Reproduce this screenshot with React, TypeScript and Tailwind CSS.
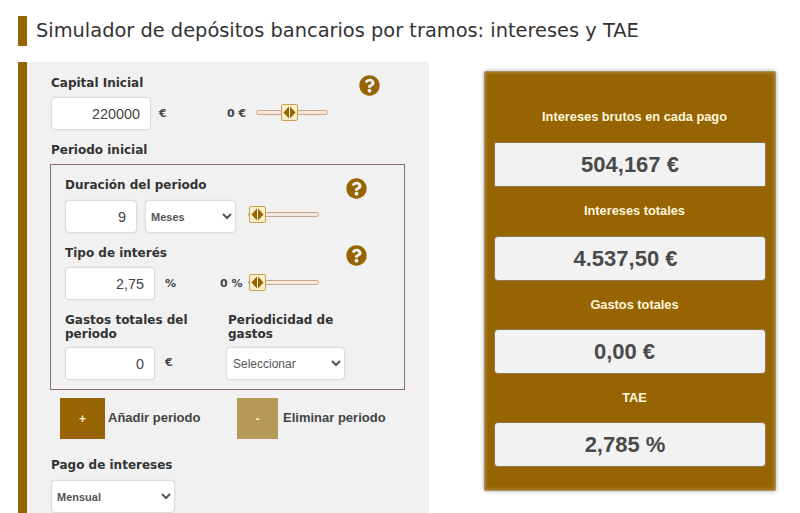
import React from 'react';
import { FaQuestionCircle } from 'react-icons/fa';

const inputCls =
  'h-[33px] rounded-[4px] border border-[#dcdcdc] bg-white pr-[10px] text-right text-[14.4px] text-[#444] [font-family:"Liberation_Sans",sans-serif] shadow-[0_0_2px_rgba(0,0,0,0.08)]';
const selectCls =
  'h-[33px] rounded-[4px] border border-[#dcdcdc] bg-white pl-[1px] text-[11px] font-bold text-[#555] [font-family:"Liberation_Sans",sans-serif] shadow-[0_0_2px_rgba(0,0,0,0.08)]';
const labelCls = 'text-[12px] leading-[14px] font-bold text-[#333] [font-family:"DejaVu_Sans",sans-serif]';
const unitCls = 'pt-[2px] text-[11px] font-bold text-[#444] [font-family:"DejaVu_Sans",sans-serif]';

const Slider = ({ width, thumbLeft, lift }: { width: string; thumbLeft: string; lift: string }) => (
  <div className={`relative h-[5px] rounded-full border border-[#c9a58a] bg-[#f5e9df] ${width} ${lift}`}>
    <div className={`absolute top-[-7px] ${thumbLeft} flex h-[17px] w-[17px] items-center justify-center rounded-[2px] border border-[#c9a24e] bg-[#fbeecb]`}>
      <svg width="13" height="13" viewBox="0 0 13 13">
        <path d="M6 0.5 L6 12.5 L0.5 6.5 Z" fill="#966400" />
        <path d="M7 0.5 L7 12.5 L12.5 6.5 Z" fill="#966400" />
      </svg>
    </div>
  </div>
);

const Help = () => <FaQuestionCircle className="text-[21px] text-[#966400]" />;

const results = [
  { label: 'Intereses brutos en cada pago', value: '504,167 €', gap: 'mt-[38px]', boxGap: 'mt-[18px]', box: 'rounded-[2px]' },
  { label: 'Intereses totales', value: '4.537,50 €', gap: 'mt-[17px]', boxGap: 'mt-[18px]', box: 'rounded-[4px] pr-[9px]' },
  { label: 'Gastos totales', value: '0,00 €', gap: 'mt-[17px]', boxGap: 'mt-[17px]', box: 'rounded-[4px] pr-[11px]' },
  { label: 'TAE', value: '2,785 %', gap: 'mt-[17px]', boxGap: 'mt-[17px]', box: 'rounded-[4px] pr-[10px]' },
];

export default function App() {
  return (
    <div className="h-[513px] w-[800px] overflow-hidden bg-white">
      <div className="pt-[16px] pl-[18px]">
        <h1 className="flex h-[30px] items-center border-l-[9px] border-[#966400] pl-[9px] text-[19.4px] font-normal text-[#333] [font-family:'DejaVu_Sans',sans-serif]">
          Simulador de depósitos bancarios por tramos: intereses y TAE
        </h1>
      </div>

      <div className="mt-[16px] flex items-start pl-[18px]">
        <div className="h-[451px] w-[411px] border-l-[9px] border-[#966400] bg-[#f1f1f1] pl-[24px]">
          <div className="relative pt-[14px]">
            <div className={labelCls}>Capital Inicial</div>
            <div className="absolute top-[13px] left-[308px]"><Help /></div>
            <div className="mt-[7px] flex items-center">
              <input className={`${inputCls} w-[100px]`} defaultValue="220000" />
              <span className={`${unitCls} ml-[8px] w-[68px]`}>€</span>
              <span className={`${unitCls} w-[29px]`}>0 €</span>
              <Slider width="w-[72px]" thumbLeft="left-[24px]" lift="mb-[2px]" />
            </div>
          </div>

          <div className={`${labelCls} mt-[13px]`}>Periodo inicial</div>

          <div className="mt-[7px] ml-[-1px] h-[226px] w-[355px] border border-[#8b6b6b] pt-[13px] pl-[14px]">
            <div className="relative">
              <div className={labelCls}>Duración del periodo</div>
              <div className="absolute top-[0px] left-[281px]"><Help /></div>
              <div className="mt-[8px] flex items-center">
                <input className={`${inputCls} w-[72px]`} defaultValue="9" />
                <select className={`${selectCls} ml-[8px] w-[91px]`} defaultValue="Meses">
                  <option>Meses</option>
                </select>
                <div className="ml-[12px]"><Slider width="w-[71px]" thumbLeft="left-[0px]" lift="mb-[4px]" /></div>
              </div>
            </div>

            <div className="relative mt-[13px]">
              <div className={labelCls}>Tipo de interés</div>
              <div className="absolute top-[-1px] left-[281px]"><Help /></div>
              <div className="mt-[7px] flex items-center">
                <input className={`${inputCls} w-[90px]`} defaultValue="2,75" />
                <span className={`${unitCls} ml-[10px] w-[55px]`}>%</span>
                <span className={`${unitCls} w-[28px]`}>0 %</span>
                <Slider width="w-[71px]" thumbLeft="left-[0px]" lift="mb-[2px]" />
              </div>
            </div>

            <div className="mt-[13px] flex">
              <div className="w-[161px]">
                <div className={`${labelCls} w-[130px]`}>Gastos totales del periodo</div>
                <div className="mt-[6px] flex items-center">
                  <input className={`${inputCls} w-[90px]`} defaultValue="0" />
                  <span className={`${unitCls} ml-[10px] mb-[3px]`}>€</span>
                </div>
              </div>
              <div>
                <div className={`${labelCls} ml-[2px] w-[120px]`}>Periodicidad de gastos</div>
                <select className={`${selectCls} mt-[6px] w-[119px] pl-[2px] text-[12px] font-normal text-[#333]`} defaultValue="Seleccionar">
                  <option>Seleccionar</option>
                </select>
              </div>
            </div>
          </div>

          <div className="mt-[8px] flex items-center pl-[9px] [font-family:'Liberation_Sans',sans-serif]">
            <button className="h-[41px] w-[45px] bg-[#966400] text-[12px] font-bold text-[#fdf3d8]">+</button>
            <span className="mb-[2px] ml-[3px] w-[129px] text-[13px] font-bold text-[#444]">Añadir periodo</span>
            <button className="h-[41px] w-[41px] bg-[#b59a57] text-[12px] font-bold text-[#fdf3d8]">-</button>
            <span className="mb-[2px] ml-[5px] text-[13px] font-bold text-[#444]">Eliminar periodo</span>
          </div>

          <div className={`${labelCls} mt-[19px]`}>Pago de intereses</div>
          <select className={`${selectCls} mt-[8px] h-[33px] w-[124px]`} defaultValue="Mensual">
            <option>Mensual</option>
          </select>
        </div>

        <div className="mt-[9px] ml-[55px] h-[420px] w-[292px] overflow-hidden rounded-[2px] border border-[#a89060] bg-[#966400] px-[9px] shadow-[0_0_4px_rgba(0,0,0,0.35),inset_0_0_4px_rgba(255,255,255,0.35)] [font-family:'Liberation_Sans',sans-serif]">
          {results.map((item) => (
            <div key={item.label} className="flow-root">
              <div className={`${item.gap} pl-[9px] text-center text-[12.8px] leading-[14px] font-bold text-[#fff6de]`}>{item.label}</div>
              <div className={`${item.boxGap} flex h-[45px] items-center justify-center border border-[#8f7a55] bg-[#f2f2f2] text-[22px] font-bold text-[#4a4a4a] ${item.box}`}>
                {item.value}
              </div>
            </div>
          ))}
        </div>
      </div>
    </div>
  );
}
